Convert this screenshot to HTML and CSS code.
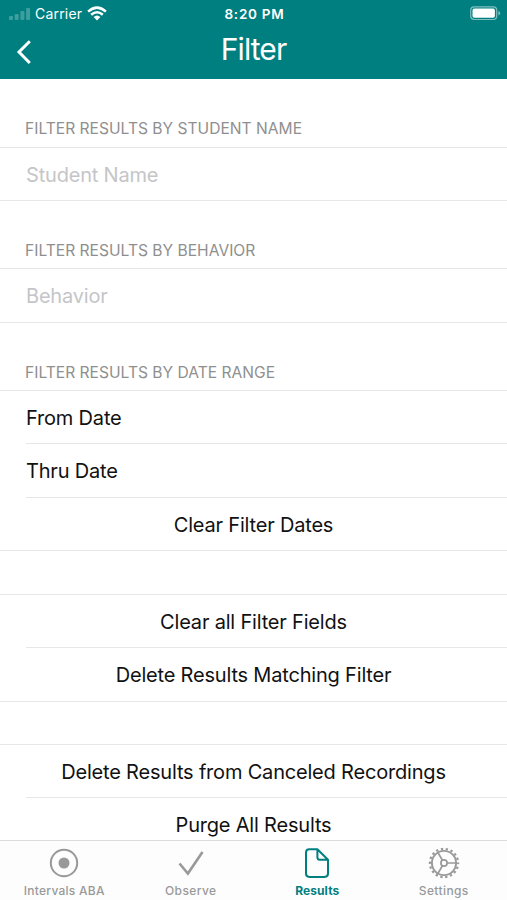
FILE: index.html
```html
<!DOCTYPE html>
<html lang="en">
<head>
<meta charset="utf-8">
<title>Filter</title>
<link rel="stylesheet" href="styles.css">
</head>
<body>
<div class="screen">
  <header class="header">
    <div class="status">
      <div class="carrier">
        <svg class="signal" width="22" height="14" viewBox="0 0 22 14"><g fill="#fff" opacity=".24"><rect x="0" y="9" width="4" height="4" rx="1"/><rect x="5.7" y="7" width="4" height="6" rx="1"/><rect x="11.4" y="4" width="4" height="9" rx="1"/><rect x="17.1" y="1" width="4" height="12" rx="1"/></g></svg>
        <span>Carrier</span>
        <svg class="wifi" width="20" height="15" viewBox="0 0 20 15"><g fill="none" stroke="#fff" stroke-width="2.5"><path d="M1.1 5.6Q10-2.4 18.9 5.6"/><path d="M4.2 8.8Q10 3.7 15.8 8.8"/></g><path d="M6.6 11Q10 8 13.4 11L10 14.4Z" fill="#fff"/></svg>
      </div>
      <div class="time">8:20 PM</div>
      <svg class="battery" width="31" height="15" viewBox="0 0 31 15"><rect x=".7" y=".9" width="26" height="12.6" rx="3.4" fill="none" stroke="#80bfbf" stroke-width="1.2"/><rect x="2.5" y="2.6" width="22.4" height="9.2" rx="1.8" fill="#fff"/><path d="M28.4 5Q30.2 5.6 30.2 7.2T28.4 9.4Z" fill="#80bfbf"/></svg>
    </div>
    <nav class="navbar">
      <svg class="back" width="16" height="26" viewBox="0 0 16 26"><path d="M13.8 2.2L3 13L13.8 24" fill="none" stroke="#fff" stroke-width="3"/></svg>
      <h1 class="title">Filter</h1>
    </nav>
  </header>
  <main class="content">
    <h2 class="caption first">FILTER RESULTS BY STUDENT NAME</h2>
    <div class="group"><div class="row hint">Student Name</div></div>
    <h2 class="caption">FILTER RESULTS BY BEHAVIOR</h2>
    <div class="group"><div class="row hint behavior">Behavior</div></div>
    <h2 class="caption">FILTER RESULTS BY DATE RANGE</h2>
    <div class="group">
      <div class="row">From Date</div>
      <div class="row">Thru Date</div>
      <div class="row action last">Clear Filter Dates</div>
    </div>
    <div class="group spaced">
      <div class="row action">Clear all Filter Fields</div>
      <div class="row action">Delete Results Matching Filter</div>
    </div>
    <div class="group purge">
      <div class="row action">Delete Results from Canceled Recordings</div>
      <div class="row action last">Purge All Results</div>
    </div>
  </main>
  <footer class="tabs">
    <div class="tab"><svg width="32" height="32" viewBox="0 0 32 32"><circle cx="16" cy="16" r="13.2" fill="none" stroke="#999" stroke-width="2"/><circle cx="16" cy="16" r="5.5" fill="#999"/></svg><span class="intervals">Intervals ABA</span></div>
    <div class="tab"><svg width="32" height="32" viewBox="0 0 32 32"><path d="M4.5 16.5L12.9 26.5L27.5 5" fill="none" stroke="#999" stroke-width="2.6"/></svg><span>Observe</span></div>
    <div class="tab active"><svg width="32" height="32" viewBox="0 0 32 32"><path d="M16 2.2H8.4Q5 2.2 5 5.6V26.5Q5 29.9 8.4 29.9H23.6Q27 29.9 27 26.5V12.8L16.4 2.2V10.3Q16.4 12.8 18.9 12.8H27" fill="none" stroke="#007f80" stroke-width="2" stroke-linejoin="round"/></svg><span>Results</span></div>
    <div class="tab"><svg width="32" height="32" viewBox="0 0 32 32"><g fill="none" stroke="#999"><circle cx="16" cy="16" r="14.1" stroke-width="2.2" stroke-dasharray="2.3 2.622" stroke-dashoffset="1.15"/><circle cx="16" cy="16" r="12.1" stroke-width="1.9"/><circle cx="16" cy="16" r="3.1" stroke-width="1.7"/><path d="M19.2 16H28M14.4 13.2L10 5.6M14.4 18.8L10 26.4" stroke-width="1.7"/></g></svg><span>Settings</span></div>
  </footer>
</div>
</body>
</html>
```
FILE: styles.css
```css
* { box-sizing: border-box; }
body { margin: 0; background: #fff; font-family: Inter, "Liberation Sans", sans-serif; }
svg { display: block; flex: none; }
.screen { width: 507px; height: 900px; display: flex; flex-direction: column; overflow: hidden; }
.header { flex: none; height: 79px; background: #007f80; color: #fff; }
.status { height: 27px; display: grid; grid-template-columns: 1fr auto 1fr; align-items: center; padding: 0 6px 0 9px; }
.carrier { display: flex; align-items: center; font-size: 14px; letter-spacing: .2px; }
.carrier span { margin-left: 4px; }
.wifi { margin-left: 5px; margin-top: -1px; }
.time { font-size: 13.5px; font-weight: 600; letter-spacing: .75px; margin-left: -1px; }
.battery { justify-self: end; margin-top: -1px; }
.navbar { height: 52px; display: grid; grid-template-columns: 40px 1fr 40px; align-items: center; padding: 0 16px; }
.back { margin-top: -3px; }
.title { margin: -9px 0 0; text-align: center; font-size: 30px; line-height: 40px; font-weight: 400; letter-spacing: -.9px; }
.content { flex: 1; min-height: 0; overflow: hidden; }
.caption { height: 67px; margin: 0; padding: 40px 0 0 25px; font-size: 15.6px; line-height: 20px; font-weight: 400; color: #8f8f8f; }
.caption.first { height: 68px; }
.group { border-top: 1px solid #e7e7e7; border-bottom: 1px solid #e7e7e7; }
.group.spaced { margin-top: 43px; }
.group.purge { margin-top: 42px; }
.row { height: 52px; margin-left: 26px; font-size: 20px; line-height: 54px; letter-spacing: -.19px; color: #111; }
.row + .row { height: 54px; border-top: 1px solid #e7e7e7; }
.row.behavior, .row + .row.last { height: 53px; }
.row.hint { color: #c5c5c8; }
.row.action { text-align: center; padding-right: 26px; }
.tabs { flex: none; height: 60px; display: grid; grid-template-columns: repeat(4, 1fr); padding-left: 1px; border-top: 1px solid #dcdcdc; background: #fdfdfd; }
.tab { display: flex; flex-direction: column; align-items: center; padding-top: 6px; font-size: 12px; line-height: 16px; font-weight: 500; letter-spacing: .4px; color: #999; }
.tab span { margin-top: 4px; }
.tab .intervals { letter-spacing: .27px; }
.tab.active { color: #007f80; font-weight: 700; letter-spacing: .1px; }
```
